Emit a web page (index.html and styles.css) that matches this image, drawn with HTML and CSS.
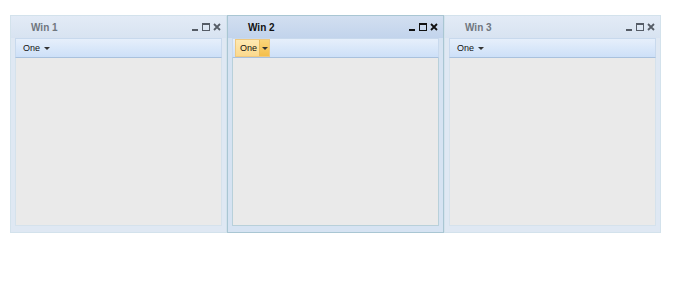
FILE: index.html
```html
<!DOCTYPE html>
<html lang="en">
<head>
  <meta charset="UTF-8" />
  <title>Windows</title>
  <link rel="stylesheet" href="styles.css">
</head>
<body>
  <div class="desk">
    <div class="win">
      <div class="win-head">
        <span class="win-title">Win 1</span>
        <div class="tools">
          <svg width="7" height="8" viewBox="0 0 7 8"><rect x="0" y="6" width="6" height="2" fill="currentColor"/></svg>
          <svg width="8" height="8" viewBox="0 0 8 8"><rect x="0.5" y="0.5" width="7" height="7" fill="none" stroke="currentColor"/><rect x="0" y="0" width="8" height="2" fill="currentColor"/></svg>
          <svg width="8" height="8" viewBox="0 0 8 8"><path d="M1 1L7 7M7 1L1 7" stroke="currentColor" stroke-width="1.8"/></svg>
        </div>
      </div>
      <div class="toolbar">
        <span class="btn"><span class="btn-text">One</span><span class="arrow"><svg width="6" height="3" viewBox="0 0 6 3"><path d="M0 0H6L3 3Z" fill="#333"/></svg></span></span>
      </div>
      <div class="win-body"></div>
    </div>

    <div class="win active">
      <div class="win-head">
        <span class="win-title">Win 2</span>
        <div class="tools">
          <svg width="7" height="8" viewBox="0 0 7 8"><rect x="0" y="6" width="6" height="2" fill="currentColor"/></svg>
          <svg width="8" height="8" viewBox="0 0 8 8"><rect x="0.5" y="0.5" width="7" height="7" fill="none" stroke="currentColor"/><rect x="0" y="0" width="8" height="2" fill="currentColor"/></svg>
          <svg width="8" height="8" viewBox="0 0 8 8"><path d="M1 1L7 7M7 1L1 7" stroke="currentColor" stroke-width="1.8"/></svg>
        </div>
      </div>
      <div class="toolbar">
        <span class="btn over"><span class="btn-text">One</span><span class="arrow"><svg width="6" height="3" viewBox="0 0 6 3"><path d="M0 0H6L3 3Z" fill="#333"/></svg></span></span>
      </div>
      <div class="win-body"></div>
    </div>

    <div class="win">
      <div class="win-head">
        <span class="win-title">Win 3</span>
        <div class="tools">
          <svg width="7" height="8" viewBox="0 0 7 8"><rect x="0" y="6" width="6" height="2" fill="currentColor"/></svg>
          <svg width="8" height="8" viewBox="0 0 8 8"><rect x="0.5" y="0.5" width="7" height="7" fill="none" stroke="currentColor"/><rect x="0" y="0" width="8" height="2" fill="currentColor"/></svg>
          <svg width="8" height="8" viewBox="0 0 8 8"><path d="M1 1L7 7M7 1L1 7" stroke="currentColor" stroke-width="1.8"/></svg>
        </div>
      </div>
      <div class="toolbar">
        <span class="btn"><span class="btn-text">One</span><span class="arrow"><svg width="6" height="3" viewBox="0 0 6 3"><path d="M0 0H6L3 3Z" fill="#333"/></svg></span></span>
      </div>
      <div class="win-body"></div>
    </div>
  </div>
</body>
</html>
```

FILE: styles.css
```css
* {
  margin: 0;
  padding: 0;
  box-sizing: border-box;
}
body {
  background: #ffffff;
  font-family: "Liberation Sans", Arial, sans-serif;
  font-size: 11px;
  color: #222;
}
.desk {
  display: flex;
  padding: 15px 0 0 10px;
}
.win {
  width: 217px;
  height: 218px;
  display: flex;
  flex-direction: column;
  border: 1px solid #d3e2ec;
  background: #dfe8f3;
  padding: 0 4px 6px;
}
.win.active {
  border-color: #a9c6d3;
  background: #d6e3f2;
}
.win-head {
  height: 22px;
  display: flex;
  align-items: center;
  justify-content: space-between;
  margin: 0 -4px;
  padding: 0 5px 0 20px;
  background: linear-gradient(#e3ebf6, #d8e3f1);
}
.win.active .win-head {
  background: linear-gradient(#d2dff0, #c2d4ec);
}
.win-title {
  font-weight: bold;
  font-size: 10px;
  color: #70767e;
}
.win.active .win-title {
  color: #111;
}
.tools {
  display: flex;
  align-items: center;
  gap: 3px;
  color: #555c66;
}
.tools svg {
  display: block;
}
.win.active .tools {
  color: #111;
}
.toolbar {
  height: 20px;
  border: 1px solid #c8d9ed;
  border-bottom-color: #a9c1dd;
  background: linear-gradient(#e6effb, #cde0f8);
  display: flex;
  align-items: center;
  padding: 0 2px;
}
.btn {
  display: flex;
  align-items: stretch;
  height: 18px;
  font-size: 9px;
  color: #111;
  border: 1px solid transparent;
}
.btn-text {
  display: flex;
  align-items: center;
  padding: 0 2px 0 4px;
}
.arrow {
  display: flex;
  align-items: center;
  justify-content: center;
  width: 10px;
}
.btn.over {
  background: linear-gradient(#fde9b3, #fbd98d);
  border-color: #efc981;
}
.btn.over .arrow {
  border-left: 1px solid #e9bb5e;
  background: linear-gradient(#fbd57a, #f4bf4c);
}
.win-body {
  flex: 1;
  background: #eaeaea;
  border: 1px solid #d5e2ec;
  border-top: none;
}
.win.active .win-body {
  border-color: #b8d0da;
}
```
